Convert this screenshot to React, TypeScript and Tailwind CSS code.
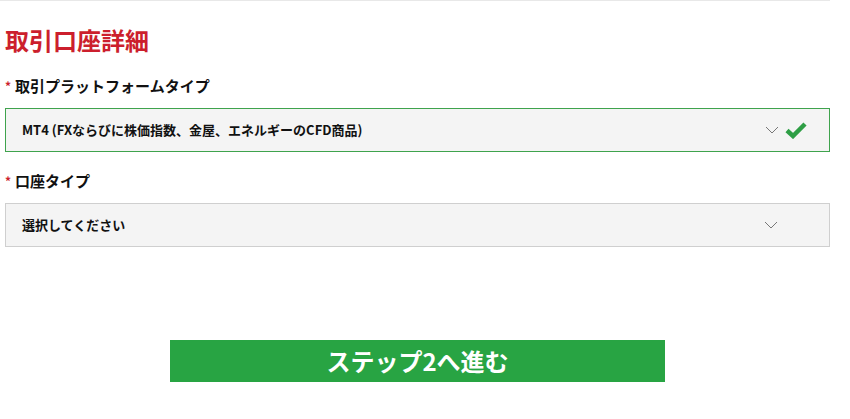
import React from "react";

const font = { fontFamily: '"Noto Sans CJK JP", "Noto Sans", sans-serif' };

function Chevron() {
  return (
    <svg width="14" height="8" viewBox="0 0 14 8" className="block">
      <path d="M1 1 L7 7 L13 1" fill="none" stroke="#777" strokeWidth="1" />
    </svg>
  );
}

function Check() {
  return (
    <svg width="22" height="18" viewBox="0 0 22 18" className="block">
      <path d="M2 9.5 L8 15 L20 3" fill="none" stroke="#2e9e45" strokeWidth="4.5" strokeLinecap="butt" strokeLinejoin="miter" />
    </svg>
  );
}

export default function App() {
  return (
    <div className="w-[850px] h-[419px] bg-white" style={font}>
      <div className="w-[830px] h-px bg-[#e8e8e8]" />
      <div className="w-[830px] pl-[5px]">
        <h1 className="mt-[27px] text-[24px] leading-[24px] font-bold text-[#cc1f2d]">取引口座詳細</h1>
        <div className="mt-[24px] flex items-center h-[20px] text-[15px] font-bold text-[#111]">
          <span className="text-[#cc1f2d] text-[12px] mr-[4px]">*</span>
          <span>取引プラットフォームタイプ</span>
        </div>
        <div className="mt-[12px] h-[44px] border border-[#3fa34d] bg-[#f4f4f4] flex items-center pl-[16px] pr-[22px]">
          <span className="flex-1 text-[13px] font-bold text-[#111]">MT4 (FXならびに株価指数、金屋、エネルギーのCFD商品)</span>
          <Chevron />
          <span className="ml-[6px]"><Check /></span>
        </div>
        <div className="mt-[19px] flex items-center h-[20px] text-[15px] font-bold text-[#111]">
          <span className="text-[#cc1f2d] text-[12px] mr-[4px]">*</span>
          <span>口座タイプ</span>
        </div>
        <div className="mt-[12px] h-[44px] border border-[#cfcfcf] bg-[#f4f4f4] flex items-center pl-[16px] pr-[51px]">
          <span className="flex-1 text-[13px] font-bold text-[#111]">選択してください</span>
          <Chevron />
        </div>
        <div className="mt-[93px] flex justify-center">
          <button className="w-[495px] h-[42px] bg-[#28a443] text-white text-[24px] font-bold leading-none flex items-center justify-center">
            ステップ2へ進む
          </button>
        </div>
      </div>
    </div>
  );
}
